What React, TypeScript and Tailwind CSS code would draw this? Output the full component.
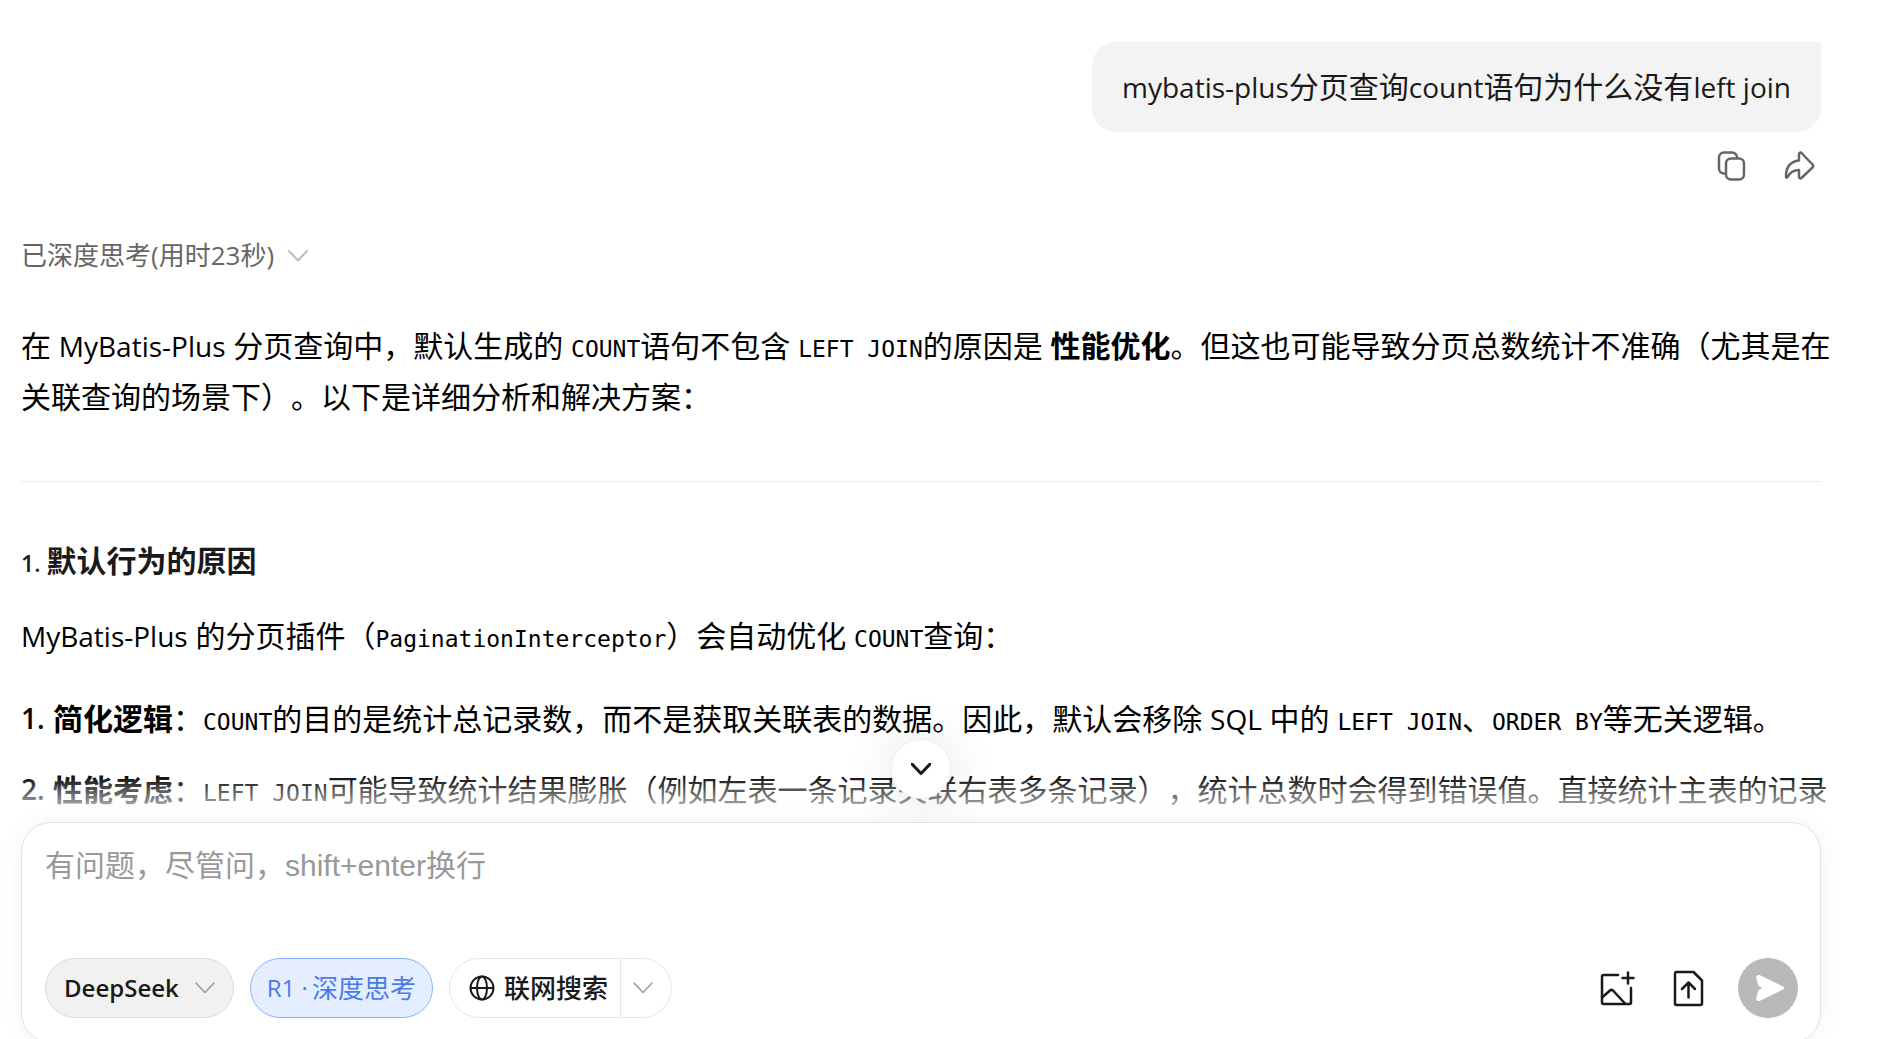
import type { ReactNode } from 'react';

function Code({ children }: { children: ReactNode }) {
  return <code className="font-['DejaVu_Sans_Mono','Noto_Sans_CJK_SC',monospace] text-[23px] leading-none">{children}</code>;
}

function Latin({ children }: { children: ReactNode }) {
  return <span className="text-[28px] leading-none">{children}</span>;
}

function ChevronDown({ className }: { className?: string }) {
  return (
    <svg viewBox="0 0 20 12" className={className} fill="none" stroke="currentColor" strokeLinecap="round" strokeLinejoin="round">
      <path d="M1 1l9 9.500 9-9.500" />
    </svg>
  );
}

export default function App() {
  return (
    <div className="h-screen overflow-hidden flex flex-col bg-white pl-[21px] pr-[73px] text-black font-['Open_Sans','Noto_Sans_CJK_SC',sans-serif] [text-spacing-trim:space-all]">
      <main className="relative flex-1 min-h-0 pt-[42px] text-[30px] leading-[51px]">
        <div className="flex flex-col items-end">
          <div className="rounded-3xl rounded-tr bg-[#f3f3f3] px-[30px] py-5 leading-[50px] text-[#1a1a1a]">
            <Latin>mybatis-plus</Latin>分页查询<Latin>count</Latin>语句为什么没有<Latin>left join</Latin>
          </div>
          <div className="mt-4 mr-1 flex gap-8 text-[#666]">
            <button aria-label="复制">
              <svg viewBox="0 0 36 36" className="size-9" fill="none" stroke="currentColor" strokeWidth="2.500" strokeLinejoin="round">
                <rect x="13" y="10.500" width="18" height="21" rx="5" />
                <path d="M13 25.500h-2a5 5 0 0 1-5-5V9.500a5 5 0 0 1 5-5h8a5 5 0 0 1 5 5v1" />
              </svg>
            </button>
            <button aria-label="分享">
              <svg viewBox="0 0 36 36" className="size-9" fill="none" stroke="currentColor" strokeWidth="2.500" strokeLinejoin="round">
                <path d="M18 6.500c0-2 1.500-2.500 3-1l10.500 11c1 1 1 2 0 3L21 29.500c-1.500 1.500-3 1-3-1V22c-6 0-9 2.500-11.500 7-.5 1-1.500 1-1.500-.5C5 19.500 9 13.500 18 12.500z" />
              </svg>
            </button>
          </div>
        </div>

        <button className="mt-[46px] flex items-center gap-3.5 text-[26px] text-[#666]">
          <span>已深度思考(用时23秒)</span>
          <ChevronDown className="w-5 stroke-2 text-[#bbb]" />
        </button>

        <p className="mt-[39px] -mr-2.5">
          在 <Latin>MyBatis-Plus</Latin> 分页查询中，默认生成的 <Code>COUNT</Code>语句不包含 <Code>LEFT JOIN</Code>的原因是 <strong>性能优化</strong>。但这也可能导致分页总数统计不准确（尤其是在关联查询的场景下）。以下是详细分析和解决方案：
        </p>
        <hr className="mt-[59px] border-[#ebebeb]" />
        <h3 className="mt-[53px] font-bold text-[#1a1a1a]">
          <span className="text-[23px] leading-none font-semibold">1. </span>默认行为的原因
        </h3>
        <p className="mt-6">
          <Latin>MyBatis-Plus</Latin> 的分页插件（<Code>PaginationInterceptor</Code>）会自动优化 <Code>COUNT</Code>查询：
        </p>
        <ol className="mt-8 -mr-2.5 flex flex-col gap-5">
          <li className="flex">
            <span className="w-8 shrink-0 text-[28px] font-semibold">1.</span>
            <p><strong>简化逻辑</strong>：<Code>COUNT</Code>的目的是统计总记录数，而不是获取关联表的数据。因此，默认会移除 <Latin>SQL</Latin> 中的 <Code>LEFT JOIN</Code>、<Code>ORDER BY</Code>等无关逻辑。</p>
          </li>
          <li className="flex">
            <span className="w-8 shrink-0 text-[28px] font-semibold">2.</span>
            <p><strong>性能考虑</strong>：<Code>LEFT JOIN</Code>可能导致统计结果膨胀（例如左表一条记录关联右表多条记录），统计总数时会得到错误值。直接统计主表的记录</p>
          </li>
        </ol>

        {/* Fade above the composer */}
        <div className="absolute left-0 -right-2.5 bottom-0 h-12 bg-linear-to-b from-white/0 to-white pointer-events-none" />
        <button
          aria-label="回到底部"
          className="absolute bottom-[23px] left-1/2 -translate-x-1/2 flex size-[60px] items-center justify-center rounded-full border border-[#f0f0f0] bg-white shadow-[0_0_50px_rgba(0,0,0,0.12)]"
        >
          <ChevronDown className="w-5 stroke-3 text-[#1a1a1a]" />
        </button>
      </main>

      <form className="relative -mb-1 flex flex-col rounded-[30px] border border-[#e2e2e2] bg-white px-[23px] pt-[18px] pb-6 shadow-[0_0_24px_rgba(0,0,0,0.05)]">
        <textarea
          aria-label="输入问题"
          rows={2}
          placeholder="有问题，尽管问，shift+enter换行"
          className="h-[117px] w-full resize-none text-[30px] leading-[50px] outline-none placeholder:text-[#999] font-['Liberation_Sans','Noto_Sans_CJK_SC',sans-serif]"
        />
        <div className="flex items-center gap-4 text-[26px] font-medium text-[#1a1a1a]">
          <button type="button" className="flex h-[60px] items-center gap-4 rounded-full border border-[#dcdcdc] bg-[#f1f1f1] px-[18px]">
            <span className="text-[24px] font-semibold">DeepSeek</span>
            <ChevronDown className="w-5 stroke-[1.5] text-[#999]" />
          </button>
          <button type="button" className="flex h-[60px] items-center gap-1 rounded-full border border-[#8ab2ff] bg-[#e5eeff] px-4 font-normal text-[#4a7bec]">
            <span className="text-[24px]">R1 ·</span>
            <span>深度思考</span>
          </button>
          <div className="flex h-[60px] items-center rounded-full border border-[#e8e8e8]">
            <button type="button" className="flex h-full items-center gap-2 border-r border-[#e8e8e8] pl-[18px] pr-3">
              <svg viewBox="0 0 28 28" className="size-7" fill="none" stroke="currentColor" strokeWidth="2">
                <circle cx="14" cy="14" r="11.500" />
                <ellipse cx="14" cy="14" rx="5" ry="11.500" />
                <path d="M2.500 14h23" />
              </svg>
              联网搜索
            </button>
            <button type="button" aria-label="搜索选项" className="flex h-full items-center pl-3 pr-[18px]">
              <ChevronDown className="w-5 stroke-[1.5] text-[#999]" />
            </button>
          </div>

          <div className="-mr-px ml-auto flex items-center gap-[30px]">
            <button type="button" aria-label="上传图片">
              <svg viewBox="0 0 40 40" className="size-10" fill="none" stroke="currentColor" strokeWidth="2.500" strokeLinecap="round" strokeLinejoin="round">
                <path d="M20 7H5.500a1.500 1.500 0 0 0-1.500 1.500v26a1.500 1.500 0 0 0 1.500 1.500h26a1.500 1.500 0 0 0 1.500-1.500V20" />
                <path d="M4 29.500l8-7c1-.9 2-.9 3 0L27 35.500" />
                <path d="M30 4.500v11M24.500 10h11" />
              </svg>
            </button>
            <button type="button" aria-label="上传文件">
              <svg viewBox="0 0 40 40" className="size-10" fill="none" stroke="currentColor" strokeWidth="2.500" strokeLinecap="round" strokeLinejoin="round">
                <path d="M8 4h17.500l8.500 8.500V35.500a1.500 1.500 0 0 1-1.500 1.500h-24a1.500 1.500 0 0 1-1.500-1.500V5.500A1.500 1.500 0 0 1 8 4z" />
                <path d="M20.500 29.500v-15M14 21l6.500-6.500L27 21" />
              </svg>
            </button>
            <button type="submit" aria-label="发送" className="flex size-[60px] items-center justify-center rounded-full bg-[#b9b9b9] text-white">
              <svg viewBox="0 0 60 60" className="size-[60px]" fill="currentColor">
                <path d="M22 17.200l23 11.200c1.500.8 1.500 2.400 0 3.200l-23 11.200c-2.400 1-4.300-.5-3.700-3l1.700-6.300c.4-1.400 2-2.500 4.500-3.500-2.500-1-4.100-2.100-4.500-3.500l-1.700-6.300c-.6-2.500 1.300-4 3.700-3z" />
              </svg>
            </button>
          </div>
        </div>
      </form>
    </div>
  );
}
